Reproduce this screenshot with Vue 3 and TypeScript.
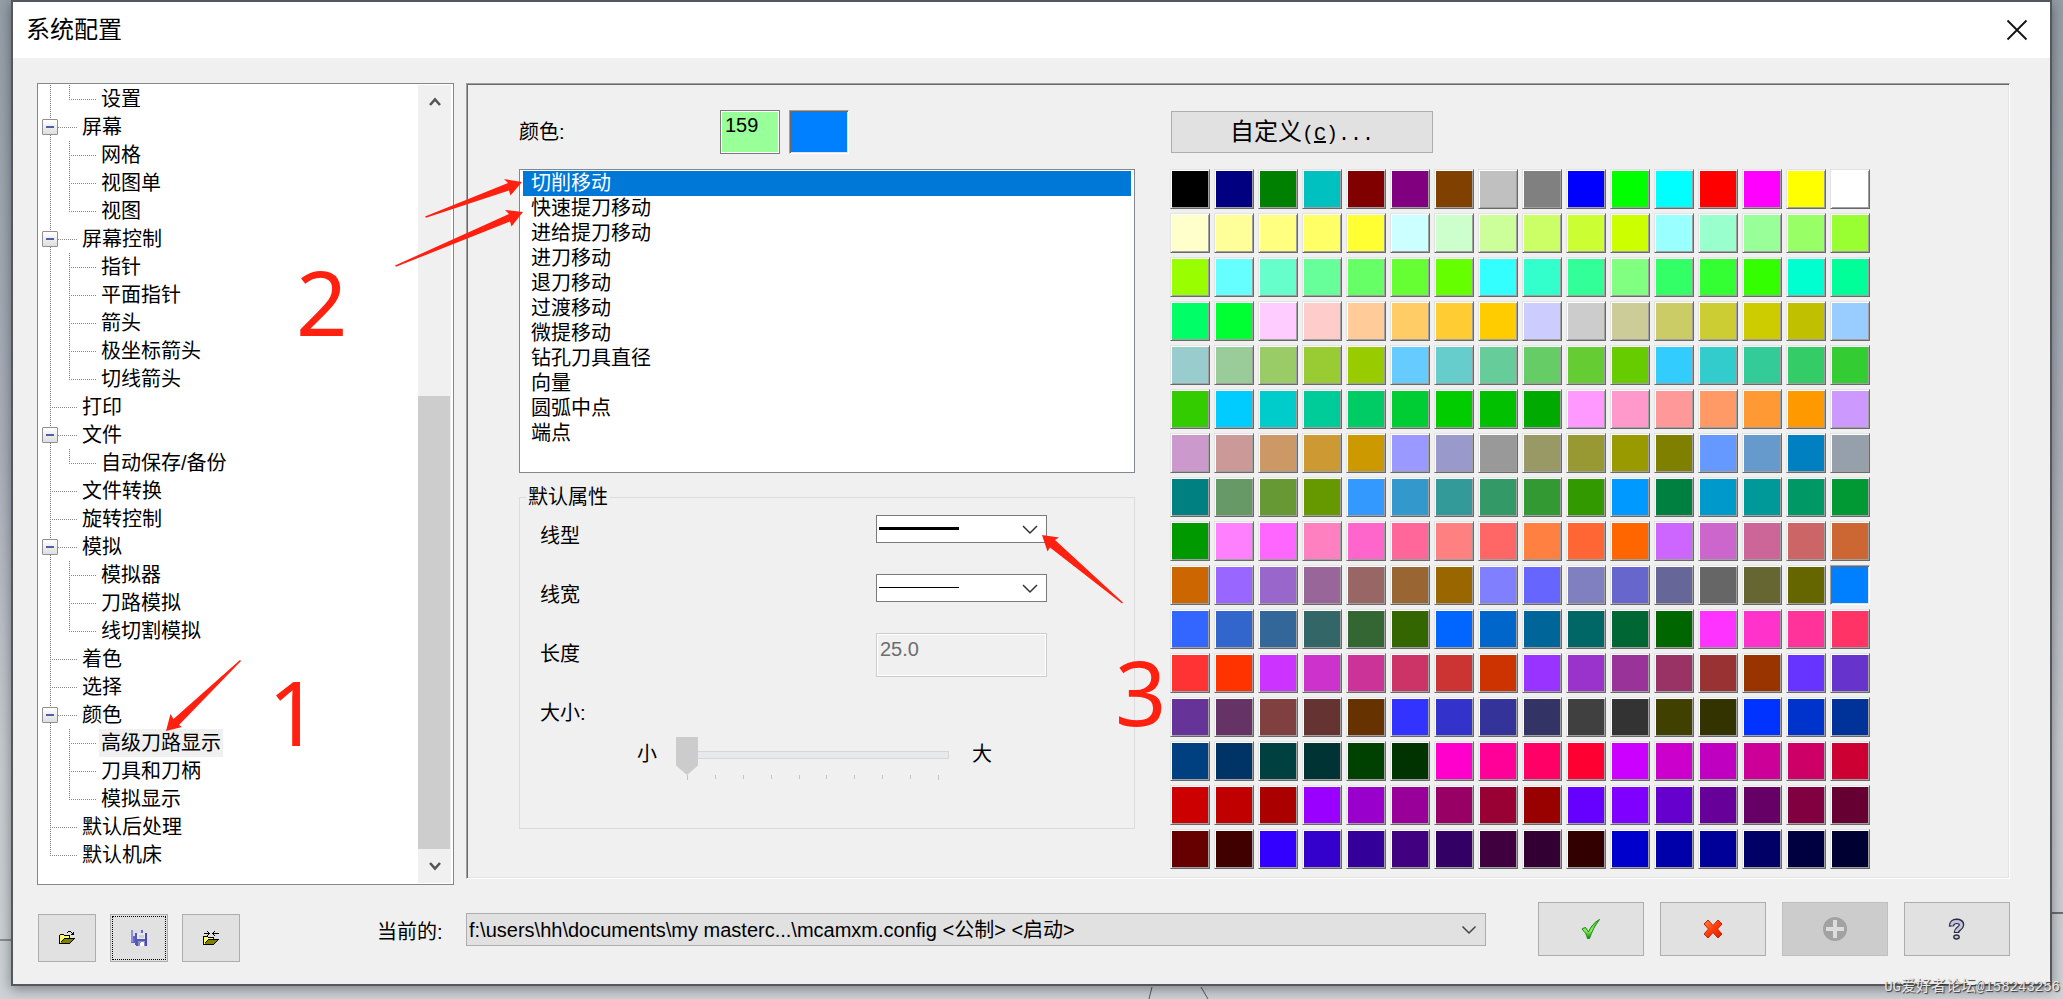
<script setup lang="ts">
import { ref } from 'vue'

interface Group {
  label?: string
  children?: string[]
}

const groups: Group[] = [
  { children: ['设置'] },
  { label: '屏幕', children: ['网格', '视图单', '视图'] },
  { label: '屏幕控制', children: ['指针', '平面指针', '箭头', '极坐标箭头', '切线箭头'] },
  { label: '打印' },
  { label: '文件', children: ['自动保存/备份'] },
  { label: '文件转换' },
  { label: '旋转控制' },
  { label: '模拟', children: ['模拟器', '刀路模拟', '线切割模拟'] },
  { label: '着色' },
  { label: '选择' },
  { label: '颜色', children: ['高级刀路显示', '刀具和刀柄', '模拟显示'] },
  { label: '默认后处理' },
  { label: '默认机床' },
]
const page = ref('高级刀路显示')

const moves = [
  '切削移动', '快速提刀移动', '进给提刀移动', '进刀移动', '退刀移动', '过渡移动',
  '微提移动', '钻孔刀具直径', '向量', '圆弧中点', '端点',
]
const move = ref(0)

const palette = `
000000 000080 008000 00C0C0 800000 800080 804000 C0C0C0 808080 0000FF 00FF00 00FFFF FF0000 FF00FF FFFF00 FFFFFF
FFFFCC FFFF99 FFFF80 FFFF66 FFFF33 CCFFFF CCFFCC CCFF99 CCFF66 CCFF33 CCFF00 99FFFF 99FFCC 99FF99 99FF66 99FF33
99FF00 66FFFF 66FFCC 66FF99 66FF66 66FF33 66FF00 33FFFF 33FFCC 33FF99 80FF80 33FF66 33FF33 33FF00 00FFD0 00FF99
00FF66 00FF33 FFCCFF FFCCCC FFCC99 FFCC66 FFCC33 FFCC00 CCCCFF CCCCCC CCCC99 CCCC66 CCCC33 CCCC00 C0C000 99CCFF
99CCCC 99CC99 99CC66 99CC33 99CC00 66CCFF 66CCCC 66CC99 66CC66 66CC33 66CC00 33CCFF 33CCCC 33CC99 33CC66 33CC33
33CC00 00CCFF 00CCCC 00CC99 00CC66 00CC33 00CC00 00C000 00AA00 FF99FF FF99CC FF9999 FF9966 FF9933 FF9900 CC99FF
CC99CC CC9999 CC9966 CC9933 CC9900 9999FF 9999CC 999999 999966 999933 999900 808000 6699FF 6699CC 0080C0 96A0AA
008080 669966 669933 669900 3399FF 3399CC 339999 339966 339933 339900 0099FF 008040 0099CC 009999 009966 009933
009900 FF80FF FF66FF FF80C0 FF66CC FF6699 FF8080 FF6666 FF8040 FF6633 FF6600 CC66FF CC66CC CC6699 CC6666 CC6633
CC6600 9966FF 9966CC 996699 996666 996633 996600 8080FF 6666FF 8080C0 6666CC 666699 666666 666633 666600 0080FF
3366FF 3366CC 336699 336666 336633 336600 0066FF 0066CC 006699 006666 006633 006600 FF33FF FF33CC FF3399 FF3366
FF3333 FF3300 CC33FF CC33CC CC3399 CC3366 CC3333 CC3300 9933FF 9933CC 993399 993366 993333 993300 6633FF 6633CC
663399 663366 804040 663333 663300 3333FF 3333CC 333399 333366 404040 333333 404000 333300 0033FF 0033CC 003399
004080 003366 004040 003333 004000 003300 FF00CC FF0099 FF0066 FF0033 CC00FF CC00CC C000C0 CC0099 CC0066 CC0033
CC0000 C00000 AA0000 9900FF 9900CC 990099 990066 990033 990000 6600FF 8000FF 6600CC 660099 660066 800040 660033
660000 400000 3300FF 3300CC 330099 400080 330066 400040 330033 330000 0000CC 0000AA 000099 000066 000040 000033
`.trim().split(/\s+/).map((c) => '#' + c)
const picked = ref(159)
</script>

<template>
  <div class="desktop">
    <svg class="sketch left-edge" width="11" height="2" aria-hidden="true"><path d="M0 1h11" stroke="#8b8d8f" stroke-width="2" /></svg>
    <svg class="sketch right-edge" width="11" height="2" aria-hidden="true"><path d="M0 1h11" stroke="#6b6d6f" stroke-width="2" /></svg>
    <svg class="sketch curve" width="64" height="12" viewBox="0 0 64 12" fill="none" stroke="#55585b" aria-hidden="true">
      <path d="M4 0L1 12M53 0l7 12" />
    </svg>

    <main class="window">
      <header class="titlebar">
        <h1>系统配置</h1>
        <button class="close" type="button" aria-label="关闭">
          <svg width="22" height="22" viewBox="0 0 22 22"><path d="M1.500 1.500l19 19M20.500 1.500l-19 19" stroke="#111" stroke-width="1.800" /></svg>
        </button>
      </header>

      <div class="body">
        <nav class="tree-box" aria-label="配置">
          <ul class="tree">
            <li v-for="(g, i) in groups" :key="i" class="branch">
              <div v-if="g.label" class="row root">
                <button v-if="g.children" class="expander" type="button" :aria-label="g.label + ' 折叠'"></button>
                <button class="node" :class="{ current: page === g.label }" type="button" @click="page = g.label!">{{ g.label }}</button>
              </div>
              <ul v-if="g.children" class="leaves">
                <li v-for="c in g.children" :key="c" class="row leaf">
                  <button class="node" :class="{ current: page === c }" type="button" @click="page = c">{{ c }}</button>
                </li>
              </ul>
            </li>
          </ul>
          <div class="scrollbar">
            <button type="button" aria-label="向上">
              <svg width="12" height="10" viewBox="0 0 12 10"><path d="M1 8l5-5.500L11 8" fill="none" stroke="#555" stroke-width="2.600" /></svg>
            </button>
            <div class="track"><div class="thumb"></div></div>
            <button type="button" aria-label="向下">
              <svg width="12" height="10" viewBox="0 0 12 10"><path d="M1 2l5 5.500L11 2" fill="none" stroke="#555" stroke-width="2.600" /></svg>
            </button>
          </div>
        </nav>

        <section class="panel">
          <div class="settings">
            <div class="color-row">
              <label for="color-no">颜色:</label>
              <input id="color-no" class="color-no" v-model.number="picked" />
              <div class="color-now"></div>
            </div>

            <ul class="moves" role="listbox" aria-label="移动">
              <li v-for="(m, i) in moves" :key="m" role="option" :aria-selected="move === i" :class="{ selected: move === i }" @click="move = i">{{ m }}</li>
            </ul>

            <fieldset>
              <legend>默认属性</legend>
              <div class="field">
                <label for="style">线型</label>
                <div class="combo">
                  <select id="style"><option aria-label="实线"></option></select>
                  <svg width="170" height="27" viewBox="0 0 170 27" aria-hidden="true"><path d="M3 13.500h80" stroke="#000" stroke-width="3" /><path d="M147 11l7 7 7-7" fill="none" stroke="#333" stroke-width="1.500" /></svg>
                </div>
              </div>
              <div class="field">
                <label for="width">线宽</label>
                <div class="combo">
                  <select id="width"><option aria-label="细"></option></select>
                  <svg width="170" height="27" viewBox="0 0 170 27" aria-hidden="true"><path d="M3 13.500h80" stroke="#000" /><path d="M147 11l7 7 7-7" fill="none" stroke="#333" stroke-width="1.500" /></svg>
                </div>
              </div>
              <div class="field">
                <label for="length">长度</label>
                <input id="length" class="length" value="25.0" disabled />
              </div>
              <div class="field last"><label for="size">大小:</label></div>
              <div class="slider-row">
                <span>小</span>
                <div class="slider">
                  <input id="size" type="range" min="0" max="9" value="0" disabled />
                  <svg width="273" height="5" viewBox="0 0 273 5" stroke="#c4c4c4" aria-hidden="true">
                    <path d="M11.500 0v5M39.500 0v4M67.500 0v4M95.500 0v4M123.500 0v4M150.500 0v4M178.500 0v4M206.500 0v4M234.500 0v4M262.500 0v5" />
                  </svg>
                </div>
                <span>大</span>
              </div>
            </fieldset>
          </div>

          <div class="colors">
            <button class="custom" type="button"><span>自定义</span>(<u>C</u>)...</button>
            <div class="palette">
              <button v-for="(c, i) in palette" :key="i" type="button" class="swatch" :class="{ picked: picked === i }" :aria-label="c" :style="{ backgroundColor: c }" @click="picked = i"></button>
            </div>
          </div>
        </section>
      </div>

      <footer>
        <div class="files">
          <button type="button" aria-label="打开">
            <svg width="16" height="14" viewBox="0 0 16 14" shape-rendering="crispEdges">
              <path d="M1 4h4l1 1h4v3H5l-3 4H1z" fill="#ffff66" />
              <path d="M0 4h1v9H0zM1 3h4v1H1zM5 4h6v4h-1V5H5zM0 12h10v1H0zM5 7h11v1H5zM4 8h1v1H4zM3 9h1v1H3zM2 10h1v2H2zM14 8h1v1h-1zM13 9h1v1h-1zM12 10h1v1h-1zM11 11h1v1h-1zM10 12h1v1h-1z" fill="#000" />
              <path d="M5 8h9v1h-1v1h-1v1h-1v1H2v-1h1v-1h1V9h1z" fill="#808000" />
              <path d="M9 0h3v1H9zM8 1h1v1H8zM12 1h1v1h-1zM13 2h1v1h-1zM14 1h1v3h-3V3h2z" fill="#000" />
            </svg>
          </button>
          <button type="button" class="focused" aria-label="保存">
            <svg width="18" height="18" viewBox="0 0 18 18" shape-rendering="crispEdges">
              <path d="M1 1h12v13H1z" fill="#6668c0" /><path d="M3 1h8v6H3z" fill="#dcdce8" /><path d="M1 1h2v12H1z" fill="#8d8edb" />
              <path d="M5 4h12v13H6l-1-2z" fill="#5557b8" /><path d="M7 4h8v6H7z" fill="#e8e8f0" /><path d="M9 6h5v3H9z" fill="#cfcfd8" />
              <path d="M8 12h7v5H8z" fill="#8c8eca" /><path d="M11 13h3v4h-4v-2z" fill="#fff" /><path d="M15 4h2v13h-2z" fill="#494bb0" />
            </svg>
          </button>
          <button type="button" aria-label="合并">
            <svg width="18" height="15" viewBox="0 0 18 15" shape-rendering="crispEdges">
              <path d="M2 6h4l1 1h4v2H6l-3 4H2z" fill="#ffff66" />
              <path d="M1 5h1v9H1zM2 5h4v1H2zM6 6h6v3h-1V7H6zM1 13h10v1H1zM6 8h11v1H6zM5 9h1v1H5zM4 10h1v1H4zM3 11h1v2H3zM15 9h1v1h-1zM14 10h1v1h-1zM13 11h1v1h-1zM12 12h1v1h-1zM11 13h1v1h-1z" fill="#000" />
              <path d="M6 9h9v1h-1v1h-1v1h-1v1H3v-1h1v-1h1v-1h1z" fill="#808000" />
              <path d="M2 2h6v1H2zM6 1h1v3H6zM5 0h1v1H5zM5 4h1v1H5zM10 2h7v1h-7zM11 1h1v3h-1zM12 0h1v1h-1zM12 4h1v1h-1z" fill="#000" />
            </svg>
          </button>
          <label for="config">当前的:</label>
        </div>
        <div class="current-file">
          <select id="config"><option>f:\users\hh\documents\my masterc...\mcamxm.config &lt;公制&gt; &lt;启动&gt;</option></select>
          <svg width="16" height="10" viewBox="0 0 16 10" aria-hidden="true"><path d="M1.500 1.500l6.500 6.500 6.500-6.500" fill="none" stroke="#444" stroke-width="1.500" /></svg>
        </div>
        <div class="actions">
          <button type="button" aria-label="确定">
            <svg width="20" height="22" viewBox="0 0 20 22">
              <defs><linearGradient id="ok" x1="0" y1="0" x2="0" y2="1"><stop offset="0" stop-color="#3fc52e" /><stop offset=".6" stop-color="#8cf05c" /><stop offset="1" stop-color="#178010" /></linearGradient></defs>
              <path d="M1.500 10.500l3-1 3 4.500C9.500 9 13 4.500 18.500 1.500 14 7.500 11 13 8.500 20.500H6.500C5.500 16.500 4 13.500 1.500 12z" fill="url(#ok)" stroke="#128a12" />
            </svg>
          </button>
          <button type="button" aria-label="取消">
            <svg width="20" height="20" viewBox="0 0 20 20">
              <defs><linearGradient id="no" x1="0" y1="0" x2="1" y2="1"><stop offset="0" stop-color="#ff8a3a" /><stop offset=".5" stop-color="#ff3d0c" /><stop offset="1" stop-color="#d81c00" /></linearGradient></defs>
              <path d="M5 1l5 5.500L15 1l4 4-4.500 5 4.500 5-4 4-5-5.500L5 19l-4-4 4.500-5L1 5z" fill="url(#no)" stroke="#c62008" stroke-linejoin="round" />
            </svg>
          </button>
          <button type="button" class="off" disabled aria-label="应用">
            <svg width="24" height="24" viewBox="0 0 24 24"><circle cx="12" cy="12" r="12" fill="#a2a2a2" /><path d="M12 3v18M3 12h18" stroke="#dcdcdc" stroke-width="4" /></svg>
          </button>
          <button type="button" aria-label="帮助">
            <svg width="18" height="22" viewBox="0 0 18 22" fill="none" stroke-linejoin="round">
              <path d="M3.500 8.500C3 1.500 14 2 13.500 7c-.3 3.500-5 3.500-5 8" stroke="#2a2a3e" stroke-width="5.500" />
              <path d="M3.500 7.500C4 2 14 2.500 13.500 7c-.3 3.500-5 3.500-5 7" stroke="#c3c4dc" stroke-width="3" />
              <ellipse cx="8.500" cy="19" rx="2.700" ry="2" fill="#c3c4dc" stroke="#2a2a3e" stroke-width="1.300" />
            </svg>
          </button>
        </div>
      </footer>
    </main>

    <div class="notes" aria-hidden="true">
      <svg width="1200" height="800" viewBox="0 0 1200 800" fill="#ff2010">
        <path d="M522 182L504 179l4 4L425 216.500l1 1.300L509 190.500l1.500 5z" />
        <path d="M523 212l-18-2 4 4L395 265.500l1 1.300L510 221.500l1.500 5z" />
        <path d="M166 731l4.500-17 3 5L240 660l1 1L179 725l3 2z" />
        <path d="M1042 535l17 2.500-4 2.500L1123 602.500l-1 1L1050 547.500l-2.500 4z" />
      </svg>
      <span class="num one">1</span>
      <span class="num two">2</span>
      <span class="num three">3</span>
    </div>
    <div class="watermark">UG<span>爱好者论坛</span>@158243256</div>
  </div>
</template>

<style>
body {
  margin: 0;
}
</style>

<style scoped>
.desktop {
  position: relative;
  box-sizing: border-box;
  min-height: 100vh;
  padding: 0 11px 12px;
  overflow: hidden;
  background: linear-gradient(#949ea6, #a9aeb9 45%, #c6cacf 75%, #ccd2d5);
  font: 20px/28px 'Liberation Sans', 'Noto Sans CJK SC', sans-serif;
  color: #000;
}
button, input, select {
  box-sizing: border-box;
  margin: 0;
  padding: 0;
  border: 0;
  border-radius: 0;
  background: none;
  font: inherit;
  color: inherit;
  appearance: none;
}
ul {
  margin: 0;
  padding: 0;
  list-style: none;
}
svg {
  display: block;
}
.sketch {
  position: absolute;
}
.left-edge {
  left: 0;
  top: 939px;
}
.right-edge {
  right: 0;
  top: 912px;
}
.curve {
  left: 1148px;
  bottom: 0;
}
.window {
  position: relative;
  border: 2px solid #54575b;
  background: #f0f0f0;
  box-shadow: 0 3px 12px rgba(0, 0, 0, 0.4);
}
.titlebar {
  display: flex;
  align-items: center;
  justify-content: space-between;
  height: 56px;
  padding: 0 22px 0 13px;
  background: #fff;
}
h1 {
  margin: 0;
  font-size: 24px;
  font-weight: 400;
}

.body {
  display: grid;
  grid-template-columns: 417px minmax(0, 1fr);
  gap: 12px;
  align-items: start;
  padding: 25px 40px 0 24px;
}
.tree-box {
  display: flex;
  border: 1px solid #828790;
  padding: 1px 2px 1px 0;
  background: #fff;
}
.tree {
  flex: 1;
  padding-bottom: 14px;
}
.branch {
  position: relative;
}
.branch::before {
  content: '';
  position: absolute;
  left: 12px;
  top: 0;
  bottom: 0;
  width: 1px;
  background: repeating-linear-gradient(#777 0 1px, transparent 1px 2px);
}
.branch:last-child::before {
  bottom: 14px;
}
.row {
  position: relative;
  display: flex;
  height: 28px;
}
.root {
  padding-left: 42px;
}
.leaf {
  padding-left: 61px;
}
.row::after {
  content: '';
  position: absolute;
  top: 14px;
  height: 1px;
  background: repeating-linear-gradient(90deg, #888 0 1px, transparent 1px 2px);
}
.root::after {
  left: 12px;
  width: 27px;
}
.leaf::after {
  left: 31px;
  width: 27px;
}
.leaf::before {
  content: '';
  position: absolute;
  left: 31px;
  top: 0;
  bottom: 0;
  width: 1px;
  background: repeating-linear-gradient(#777 0 1px, transparent 1px 2px);
}
.leaf:last-child::before {
  bottom: 14px;
}
.node {
  padding: 0 2px;
  white-space: nowrap;
}
.current {
  background: #f0f0f0;
}
.expander {
  position: absolute;
  z-index: 1;
  left: 4px;
  top: 6px;
  width: 16px;
  height: 16px;
  border: 1px solid #919191;
  border-radius: 1px;
  background: linear-gradient(#4a63a8, #4a63a8) center / 8px 2px no-repeat, linear-gradient(#fff, #dedede);
}
.scrollbar {
  display: flex;
  flex-direction: column;
  width: 33px;
  background: #f0f0f0;
}
.scrollbar button {
  display: grid;
  place-items: center;
  height: 34px;
}
.track {
  display: flex;
  flex: 1;
  flex-direction: column;
  justify-content: flex-end;
}
.thumb {
  width: 32px;
  height: 62%;
  background: #cdcdcd;
}

.panel {
  display: flex;
  gap: 35px;
  padding: 26px 0 9px 52px;
  border: 1px solid;
  border-color: #a0a0a0 #fff #fff #a0a0a0;
  box-shadow: inset 1px 1px #696969, inset -1px -1px #e3e3e3;
}
.settings {
  width: 616px;
}
.color-row {
  display: flex;
  align-items: center;
}
.color-row label {
  width: 201px;
}
.color-no {
  width: 60px;
  height: 44px;
  padding: 0 4px 14px;
  border: 1px solid #7a7a7a;
  box-shadow: inset 0 0 0 1px #fff;
  background: #99ff99;
}
.color-now {
  box-sizing: border-box;
  width: 60px;
  height: 44px;
  margin-left: 9px;
  border: 1px solid;
  border-color: #a0a0a0 #fff #fff #a0a0a0;
  box-shadow: inset 1px 1px #696969, inset -1px -1px #e3e3e3;
  background: #0080ff;
}
.moves {
  box-sizing: border-box;
  min-height: 304px;
  margin-top: 15px;
  padding: 1px 3px;
  border: 1px solid #828790;
  background: #fff;
}
.moves li {
  padding-left: 8px;
  line-height: 25px;
}
.moves .selected {
  background: #0078d7;
  color: #fff;
}
fieldset {
  min-width: 0;
  margin: 12px 0 0;
  padding: 0 0 48px 20px;
  border: 1px solid #dcdcdc;
}
legend {
  margin-left: -14px;
  padding: 0 2px;
  line-height: 24px;
}
.field {
  display: grid;
  grid-template-columns: 336px 171px;
  height: 59px;
}
.field label {
  line-height: 54px;
}
.field.last {
  height: 51px;
}
.combo {
  position: relative;
  height: 28px;
  margin-top: 6px;
}
.combo select {
  width: 100%;
  height: 100%;
  border: 1px solid #7a7a7a;
  background: #fff;
}
.combo svg {
  position: absolute;
  left: 0;
  top: 0;
  pointer-events: none;
}
.length {
  height: 44px;
  margin-top: 6px;
  padding: 0 3px 12px;
  border: 1px solid #ccc;
  box-shadow: inset 0 0 0 1px #fff;
  color: #6d6d6d;
}
.slider-row {
  display: flex;
  padding-left: 97px;
  line-height: 34px;
}
.slider {
  width: 273px;
  margin: 0 23px 0 19px;
}
input[type='range'] {
  display: block;
  width: 100%;
  height: 36px;
  margin-bottom: 2px;
}
input[type='range']::-webkit-slider-runnable-track {
  box-sizing: border-box;
  height: 8px;
  border: 1px solid #d6d6d6;
  background: #e7eaea;
}
input[type='range']::-webkit-slider-thumb {
  appearance: none;
  width: 22px;
  height: 38px;
  margin-top: -15px;
  margin-left: -1px;
  background: #ccc;
  clip-path: polygon(0 0, 100% 0, 100% 75%, 50% 100%, 0 75%);
}

.custom {
  display: block;
  width: 262px;
  height: 42px;
  margin: 1px 0 16px 1px;
  padding-top: 4px;
  border: 1px solid #adadad;
  background: #e1e1e1;
  font: 20px/36px 'Liberation Mono', 'Noto Sans CJK SC', monospace;
}
.custom span {
  font-size: 24px;
}
.palette {
  display: grid;
  grid-template-columns: repeat(16, 40px);
  gap: 4px;
}
.swatch {
  height: 40px;
  border: 1px solid;
  border-color: #e3e3e3 #696969 #696969 #e3e3e3;
  box-shadow: inset 1px 1px #fff, inset -1px -1px #a0a0a0;
}
.picked {
  border-color: #a0a0a0 #fff #fff #a0a0a0;
  box-shadow: inset 1px 1px #696969, inset -1px -1px #e3e3e3;
}

footer {
  display: grid;
  grid-template-columns: 429px minmax(0, 1fr) auto;
  align-items: start;
  padding: 17px 40px 22px 24px;
}
.files {
  display: flex;
  gap: 14px;
  padding: 12px 0 0 1px;
}
.files button, .actions button {
  display: grid;
  place-items: center;
  width: 58px;
  height: 48px;
  border: 1px solid #adadad;
  background: #e1e1e1;
}
.files .focused {
  outline: 1px dotted #000;
  outline-offset: -3px;
}
.files label {
  margin-left: 123px;
  line-height: 36px;
  white-space: nowrap;
}
.current-file {
  position: relative;
  height: 33px;
  margin-top: 11px;
}
.current-file select {
  width: 100%;
  height: 100%;
  padding-left: 2px;
  border: 1px solid #adadad;
  background: #e1e1e1;
}
.current-file svg {
  position: absolute;
  right: 9px;
  top: 12px;
  pointer-events: none;
}
.actions {
  display: flex;
  gap: 16px;
  margin-left: 52px;
}
.actions button {
  width: 106px;
  height: 54px;
}
.actions .off {
  border-color: #bfbfbf;
  background: #ccc;
}

.notes {
  position: absolute;
  left: 0;
  top: 0;
  pointer-events: none;
}
.num {
  position: absolute;
  font: 90px/90px 'Noto Sans', 'Open Sans', sans-serif;
  color: #ff2010;
}
.one {
  left: 268px;
  top: 666px;
}
.two {
  left: 296px;
  top: 256px;
}
.three {
  left: 1115px;
  top: 646px;
}
.watermark {
  position: absolute;
  right: 3px;
  bottom: 0;
  font: 14px/22px 'Liberation Mono', 'Noto Sans CJK SC', monospace;
  color: #e8e8e8;
  text-shadow: 1px 1px 1px #333;
}
.watermark span {
  font-size: 15px;
}
</style>
